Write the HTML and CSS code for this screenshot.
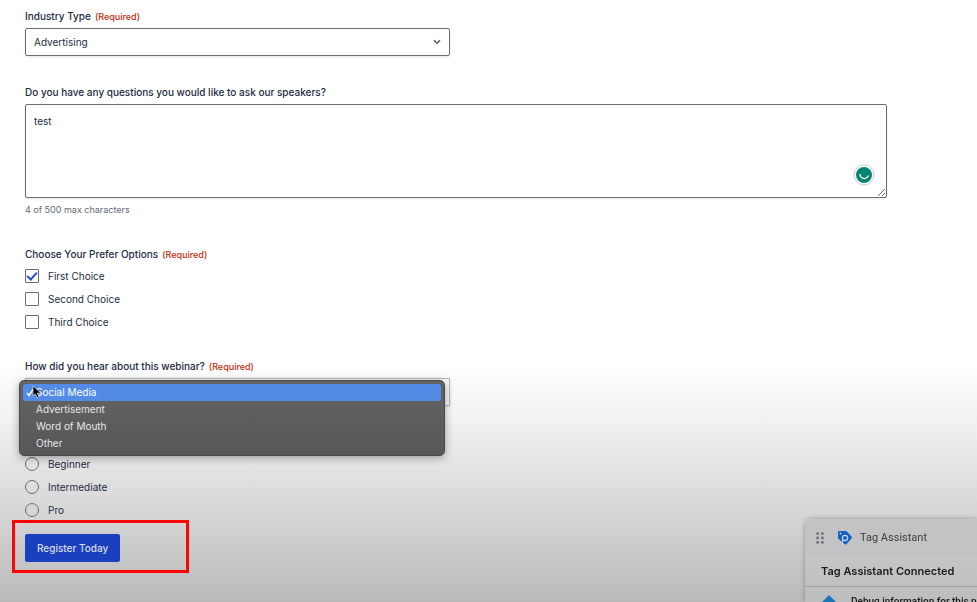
FILE: index.html
```html
<!DOCTYPE html>
<html lang="en">
<head>
<meta charset="utf-8">
<meta name="viewport" content="width=device-width, initial-scale=1">
<title>Webinar registration</title>
<link rel="stylesheet" href="styles.css">
</head>
<body>
<form class="form">
  <div class="field">
    <div class="label-row"><label for="industry">Industry Type</label><span class="required">(Required)</span></div>
    <div class="select-wrap">
      <select id="industry" class="control"><option>Advertising</option></select>
      <svg class="chevron" viewBox="0 0 8 6" aria-hidden="true"><path d="M1 1.2 4 4.2 7 1.2"/></svg>
    </div>
  </div>

  <div class="field">
    <div class="label-row"><label for="questions">Do you have any questions you would like to ask our speakers?</label></div>
    <div class="textarea-wrap">
      <textarea id="questions" class="control">test</textarea>
      <svg class="checker" viewBox="0 0 22 22" aria-hidden="true"><circle class="checker-ring" cx="11" cy="11" r="10"/><circle class="checker-disc" cx="11" cy="11" r="8"/><path d="M7 10.5a4.3 4.3 0 0 0 8.2 1.5"/></svg>
    </div>
    <p class="counter">4 of 500 max characters</p>
  </div>

  <fieldset class="field">
    <legend class="label-row">Choose Your Prefer Options<span class="required">(Required)</span></legend>
    <div class="choices">
      <label class="choice"><input type="checkbox" checked>First Choice</label>
      <label class="choice"><input type="checkbox">Second Choice</label>
      <label class="choice"><input type="checkbox">Third Choice</label>
    </div>
  </fieldset>

  <div class="field">
    <div class="label-row"><label for="source">How did you hear about this webinar?</label><span class="required">(Required)</span></div>
    <div class="select-wrap">
      <select id="source" class="control dim"><option>Social Media</option></select>
      <ul class="menu" role="listbox" aria-label="How did you hear about this webinar?">
        <li class="active" role="option" aria-selected="true"><svg class="tick" viewBox="0 0 8 9" aria-hidden="true"><path d="M1 5 3 7.5 7 1.5"/></svg>Social Media</li>
        <li role="option">Advertisement</li>
        <li role="option">Word of Mouth</li>
        <li role="option">Other</li>
      </ul>
      <svg class="pointer" viewBox="0 0 10 14" aria-hidden="true"><path d="M1 1v10l2.4-2.2L5 12.8l2-.9-1.7-3.8H9z"/></svg>
    </div>
  </div>

  <fieldset class="field levels" aria-label="Level">
    <div class="choices">
      <label class="choice"><input type="radio" name="level">Beginner</label>
      <label class="choice"><input type="radio" name="level">Intermediate</label>
      <label class="choice"><input type="radio" name="level">Pro</label>
    </div>
  </fieldset>

  <div class="submit-row"><button class="submit" type="button">Register Today</button></div>
</form>

<aside class="assistant">
  <header class="assistant-head">
    <svg class="grip" viewBox="0 0 8 12" aria-hidden="true"><circle cx="1.6" cy="1.6" r="1.4"/><circle cx="6.4" cy="1.6" r="1.4"/><circle cx="1.6" cy="6" r="1.4"/><circle cx="6.4" cy="6" r="1.4"/><circle cx="1.6" cy="10.4" r="1.4"/><circle cx="6.4" cy="10.4" r="1.4"/></svg>
    <svg class="tag" viewBox="0 0 16 16" aria-hidden="true"><path class="tag-body" d="M2 1h6.500q.8 0 1.400.6l4.600 5q.9 1 0 2L9.600 14q-1 1-2 0L1.600 9Q1 8.500 1 7.500V2q0-1 1-1z"/><circle class="tag-ring" cx="8" cy="8" r="2.600"/><path class="tag-ring" d="M6.300 9.700 5 12.500"/><circle class="tag-hole" cx="3.500" cy="3.500" r=".9"/></svg>
    <span>Tag Assistant</span>
  </header>
  <h2 class="assistant-title">Tag Assistant Connected</h2>
  <div class="assistant-row">
    <svg class="diamond" viewBox="0 0 16 16" aria-hidden="true"><path d="M8 0 16 8 8 16 0 8z"/></svg>
    <span>Debug information for this page</span>
  </div>
</aside>
</body>
</html>
```
FILE: styles.css
```css
* {
  box-sizing: border-box;
}

html {
  height: 100%;
  overflow: hidden;
}

body {
  margin: 0;
  min-height: 100%;
  color: #1c2b3f;
  font: 10px/16px Inter, "Liberation Sans", sans-serif;
  background: linear-gradient(#fff 60%, #f3f3f3 69%, #dadada 83%, #bababa) fixed;
}

.form {
  padding: 8px 90px 30px 25px;
}

.field {
  margin: 0 0 28px;
  padding: 0;
  border: 0;
  min-width: 0;
}

.label-row {
  display: flex;
  align-items: baseline;
  gap: 4px;
  height: 16px;
  margin-bottom: 4px;
  padding: 0;
  font-weight: 500;
}

.required {
  color: #c02b0a;
  font-size: 9px;
}

.select-wrap {
  position: relative;
  width: 425px;
  max-width: 100%;
}

.control {
  display: block;
  width: 100%;
  border: 1px solid #686e77;
  border-radius: 2px;
  background: #fff;
  color: inherit;
  font: inherit;
  box-shadow: 0 1px 3px rgba(0, 0, 0, .1);
}

select.control {
  height: 28px;
  padding: 0 8px;
  appearance: none;
}

select.dim {
  border-color: #b5b5b5;
  border-radius: 0;
  background: transparent;
}

.chevron {
  position: absolute;
  top: 11px;
  right: 9px;
  width: 8px;
  height: 6px;
  fill: none;
  stroke: #555b65;
  stroke-width: 1.5;
}

.textarea-wrap {
  position: relative;
}

textarea.control {
  height: 94px;
  padding: 8px;
  resize: vertical;
}

.checker {
  position: absolute;
  right: 12px;
  bottom: 12px;
  width: 22px;
  height: 22px;
  fill: none;
  stroke: #fff;
  stroke-width: 1.3;
  stroke-linecap: round;
}

.checker-ring {
  fill: #fff;
  stroke: #c9ccd6;
  stroke-width: 1;
}

.checker-disc {
  fill: #078574;
  stroke: none;
}

.counter {
  margin: 4px 0 0;
  color: #626973;
  font-size: 9px;
}

.choices {
  display: grid;
  gap: 7px;
  padding-top: 2px;
}

.choice {
  display: flex;
  align-items: center;
  gap: 9px;
}

.choice input {
  appearance: none;
  width: 14px;
  height: 14px;
  margin: 0;
  border: 1px solid #686e77;
  border-radius: 1px;
  background: transparent;
}

.choice input[type="radio"] {
  border-radius: 50%;
}

.choice input:checked {
  display: grid;
  place-items: center;
}

.choice input:checked::before {
  content: "";
  width: 8px;
  height: 4px;
  border: solid #204ce5;
  border-width: 0 0 2px 2px;
  transform: translateY(-1px) rotate(-48deg);
}

.menu {
  position: absolute;
  top: 2px;
  left: -6px;
  width: 426px;
  margin: 0;
  padding: 3px;
  list-style: none;
  color: #e6e6e6;
  font-size: 10px;
  line-height: 17px;
  border: 1px solid #484848;
  border-radius: 5px;
  background: linear-gradient(#646464, #575757);
  box-shadow: 0 2px 9px rgba(0, 0, 0, .35);
}

.menu li {
  position: relative;
  padding-left: 13px;
  border-radius: 3px;
  height: 17px;
}

.menu .active {
  color: #fff;
  background: #548be6;
}

.tick {
  position: absolute;
  top: 4px;
  left: 3px;
  width: 8px;
  height: 9px;
  fill: none;
  stroke: #fff;
  stroke-width: 1.4;
}

.pointer {
  position: absolute;
  top: 7px;
  left: 7px;
  width: 10px;
  height: 14px;
  fill: #000;
  stroke: #ddd;
  stroke-width: .7;
}

.levels {
  margin: 48px 0 0;
}

.submit-row {
  width: 177px;
  margin: 2px 0 0 -13px;
  padding: 11px 10px 8px;
  border: 3px solid #fe0505;
}

.submit {
  display: block;
  height: 28px;
  padding: 0 12px;
  border: 0;
  border-radius: 2px;
  color: #d8dce6;
  background: #1b40bd;
  font: 500 10px/28px Inter, "Liberation Sans", sans-serif;
}

.assistant {
  position: fixed;
  right: 0;
  bottom: 0;
  width: 172px;
  height: 83px;
  overflow: hidden;
  color: #1b1b1d;
  white-space: nowrap;
  border-radius: 7px 0 0 0;
  background: linear-gradient(#cdcdcd, #bdbdbd);
  box-shadow: 0 0 5px rgba(0, 0, 0, .3);
}

.assistant-head {
  display: flex;
  align-items: center;
  height: 37px;
  padding-left: 11px;
  color: #3f4043;
  font: 11px/16px Roboto, sans-serif;
  background: #c3c3c6;
}

.grip {
  width: 8px;
  height: 12px;
  margin-right: 13px;
  fill: #6d6e72;
}

.tag {
  width: 16px;
  height: 16px;
  margin-right: 7px;
}

.tag-body {
  fill: #145fc4;
}

.tag-ring {
  fill: none;
  stroke: #c9d4e6;
  stroke-width: 1.3;
}

.tag-hole {
  fill: #c9d4e6;
}

.assistant-title {
  margin: 0;
  padding-left: 16px;
  border-bottom: 1px solid #a3a3a3;
  font: 600 11px/30px Inter, sans-serif;
}

.assistant-row {
  display: flex;
  gap: 14px;
  padding: 8px 0 0 16px;
  font: 500 10px/14px Roboto, sans-serif;
}

.diamond {
  flex: none;
  width: 16px;
  height: 16px;
  fill: #1f74b5;
}
```
